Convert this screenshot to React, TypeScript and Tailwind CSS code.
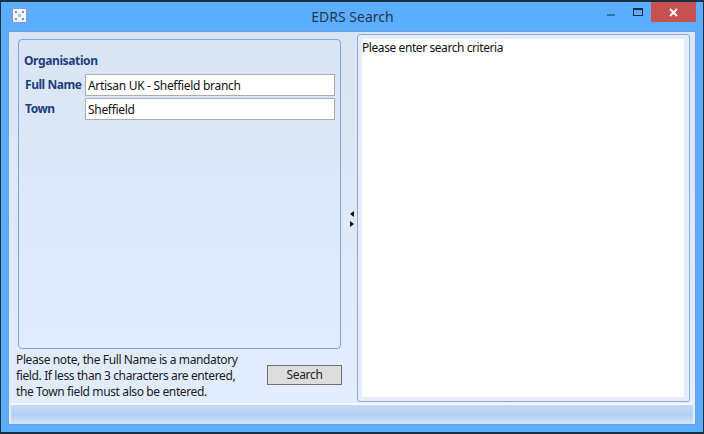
const font = "font-['Noto_Sans','Open_Sans',sans-serif]";

function Field({ label, value }: { label: string; value: string }) {
  return (
    <div className="flex items-center h-[22px]">
      <div className="w-[61px] pl-[1px] text-[12px] font-bold text-[#1f3d7d] tracking-[-0.45px] whitespace-nowrap">{label}</div>
      <div className="w-[250px] h-[22px] bg-white border border-[#ababab] pl-[2px] text-[12px] leading-[21px] text-[#111] tracking-[-0.3px]">
        {value}
      </div>
    </div>
  );
}

export default function App() {
  return (
    <div className={`w-[704px] h-[434px] bg-[#5baeff] border border-[#1c2f42] border-t-2 border-b-2 flex flex-col ${font}`}>
      {/* title bar */}
      <div className="h-[29px] shrink-0 flex items-start relative">
        <div className="ml-[11px] mt-[6px] w-[15px] h-[15px] bg-[#f4f7fb] border border-[#9a8fc4] flex items-center justify-center">
          <svg width="11" height="11" viewBox="0 0 11 11">
            <rect x="1" y="1" width="2" height="2" fill="#5b9bd5" />
            <rect x="8" y="1" width="2" height="2" fill="#5b9bd5" />
            <rect x="4" y="4" width="3" height="3" fill="#9fc4e8" />
            <rect x="1" y="8" width="2" height="2" fill="#5b9bd5" />
            <rect x="8" y="8" width="2" height="2" fill="#5b9bd5" />
          </svg>
        </div>
        <div className="absolute left-0 right-0 top-[5px] text-center text-[14px] leading-[20px] text-[#24364f] pl-[1px]">EDRS Search</div>
        <div className="ml-auto flex items-start">
          <div className="w-[8px] h-[2px] mt-[12px] mr-[18px] bg-[#3a719f]" />
          <div className="w-[8px] h-[5px] mt-[6px] mr-[8px] border border-[#16283d] border-t-2 box-content" />
          <div className="w-[45px] h-[20px] mr-[7px] bg-[#c75050] flex items-center justify-center">
            <svg width="9" height="9" viewBox="0 0 9 9">
              <path d="M1 1 L8 8 M8 1 L1 8" stroke="#fff" strokeWidth="2" />
            </svg>
          </div>
        </div>
      </div>

      {/* client area */}
      <div className="mx-[7px] mb-[7px] flex-1 border border-[#6f9fdc] bg-gradient-to-b from-[#d9e5f5] to-[#e2eeff] flex flex-col min-h-0">
        <div className="flex-1 flex min-h-0">
          {/* left column */}
          <div className="w-[338px] shrink-0 pl-[9px] pt-[7px] flex flex-col">
            <div className="w-[323px] h-[310px] rounded-[4px] border border-[#7ba7e8] pl-[5px] pt-[12px]">
              <div className="text-[12px] leading-[17px] font-bold text-[#1f3d7d] tracking-[-0.38px]">Organisation</div>
              <div className="mt-[5px] flex flex-col gap-[2px]">
                <Field label="Full Name" value="Artisan UK - Sheffield branch" />
                <Field label="Town" value="Sheffield" />
              </div>
            </div>
            <div className="flex items-center mt-[3px]">
              <div className="w-[235px] mr-[16px] -ml-[2px] text-[12px] leading-[16px] text-[#1a1a1a] tracking-[-0.38px]">
                Please note, the Full Name is a mandatory field. If less than 3 characters are entered, the Town field must also be entered.
              </div>
              <div className="w-[75px] h-[20px] mb-[2px] bg-[#dddddd] border border-[#707070] text-center text-[12px] leading-[18px] text-[#222] tracking-[-0.3px]">
                Search
              </div>
            </div>
          </div>

          {/* splitter */}
          <div className="w-[10px] shrink-0 flex flex-col items-center justify-center gap-[4px] pt-[3px]">
            <div className="w-0 h-0 border-y-[3px] border-y-transparent border-r-[4px] border-r-[#111]" />
            <div className="w-0 h-0 border-y-[3px] border-y-transparent border-l-[4px] border-l-[#111]" />
          </div>

          {/* right panel */}
          <div className="w-[333px] h-[368px] mt-[2px] rounded-[3px] border border-[#8fa9dc] bg-[#e3edfb] p-[4px] pr-[5px]">
            <div className="bg-white h-full w-full text-[12px] leading-[17px] text-[#111] tracking-[-0.42px]">Please enter search criteria</div>
          </div>
        </div>

        {/* status bar */}
        <div className="h-[21px] mx-[2px] shrink-0 border-t-2 border-[#f3f8ff] bg-gradient-to-b from-[#c5daf5] via-[#b4cff2] to-[#d3e3f8]" />
      </div>
    </div>
  );
}
